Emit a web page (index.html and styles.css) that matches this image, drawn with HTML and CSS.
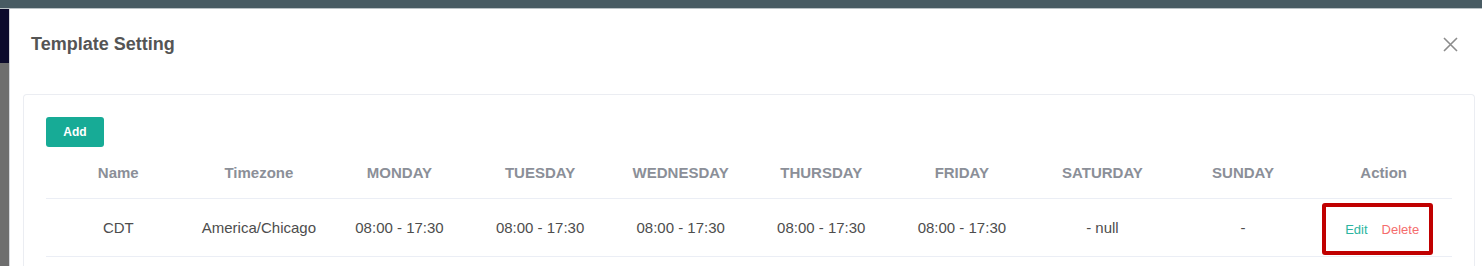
FILE: index.html
```html
<!DOCTYPE html>
<html lang="en">
<head>
  <meta charset="UTF-8">
  <title>Template Setting</title>
  <link rel="stylesheet" href="styles.css">
</head>
<body>
  <div class="topbar"></div>

  <div class="main">
    <div class="sidebar">
      <div class="sidebar-top"></div>
    </div>

    <div class="modal">
      <div class="modal-header">
        <h2 class="modal-title">Template Setting</h2>
        <button class="btn-close" aria-label="Close">
          <svg width="15" height="15" viewBox="0 0 15 15">
            <path d="M1 1 L14 14 M14 1 L1 14" stroke="#8c8c8c" stroke-width="1.6" fill="none"/>
          </svg>
        </button>
      </div>

      <div class="card">
        <button class="btn-add">Add</button>

        <table class="tabel">
          <thead>
            <tr>
              <th>Name</th>
              <th>Timezone</th>
              <th>MONDAY</th>
              <th>TUESDAY</th>
              <th>WEDNESDAY</th>
              <th>THURSDAY</th>
              <th>FRIDAY</th>
              <th>SATURDAY</th>
              <th>SUNDAY</th>
              <th>Action</th>
            </tr>
          </thead>
          <tbody>
            <tr>
              <td>CDT</td>
              <td>America/Chicago</td>
              <td>08:00 - 17:30</td>
              <td>08:00 - 17:30</td>
              <td>08:00 - 17:30</td>
              <td>08:00 - 17:30</td>
              <td>08:00 - 17:30</td>
              <td>- null</td>
              <td>-</td>
              <td>
                <span class="highlight">
                  <a class="link-edit" href="#">Edit</a>
                  <a class="link-delete" href="#">Delete</a>
                </span>
              </td>
            </tr>
          </tbody>
        </table>
      </div>
    </div>
  </div>
</body>
</html>
```

FILE: styles.css
```css
html, body {
  margin: 0;
  height: 100%;
  overflow: hidden;
}

body {
  font-family: 'Liberation Sans', Arial, sans-serif;
  background-color: #fff;
  color: #555;
}

.topbar {
  height: 8px;
  background-color: #485b63;
  border-bottom: 1px solid #b9c1c5;
}

.main {
  display: flex;
  height: calc(100% - 9px);
}

.sidebar {
  width: 9px;
  background-color: #6e6e6e;
  flex-shrink: 0;
}

.sidebar-top {
  height: 54px;
  background-color: #0c0b2c;
}

.modal {
  flex: 1;
  background-color: #fff;
  border-left: 1px solid #d6d8dc;
  padding: 0 7px 0 13px;
}

.modal-header {
  display: flex;
  align-items: center;
  justify-content: space-between;
  padding: 23px 17px 0 8px;
  height: 24px;
}

.modal-title {
  margin: 0;
  font-size: 18px;
  font-weight: bold;
  color: #555;
  line-height: 24px;
}

.btn-close {
  border: none;
  background: none;
  padding: 0;
  width: 15px;
  height: 15px;
  display: flex;
  cursor: pointer;
}

.card {
  margin-top: 38px;
  border: 1px solid #ebedf2;
  border-bottom: none;
  border-radius: 4px 4px 0 0;
  padding: 22px 22px 0 22px;
  height: 171px;
  overflow: hidden;
}

.btn-add {
  display: block;
  width: 58px;
  height: 30px;
  background-color: #17ab96;
  color: #fff;
  border: none;
  border-radius: 3px;
  font-family: inherit;
  font-size: 12px;
  font-weight: bold;
  cursor: pointer;
}

.tabel {
  width: 100%;
  border-collapse: collapse;
  table-layout: fixed;
}

.tabel th {
  height: 51px;
  padding: 0 0 0 4px;
  font-size: 15px;
  font-weight: bold;
  color: #8b8f98;
  text-align: center;
  border-bottom: 1px solid #ebeef5;
}

.tabel td {
  height: 57px;
  padding: 0 0 0 4px;
  font-size: 15px;
  color: #4d4d4d;
  text-align: center;
  border-bottom: 1px solid #ebeef5;
}

.highlight {
  display: inline-flex;
  align-items: center;
  gap: 14px;
  height: 44px;
  padding: 0 10px 0 19px;
  border: 4px solid #c00000;
  border-radius: 3px;
  margin: 3px 0 0 -12px;
}

.link-edit,
.link-delete {
  font-size: 13px;
  text-decoration: none;
}

.link-edit {
  color: #2bb5a0;
}

.link-delete {
  color: #f56c6c;
}
```
